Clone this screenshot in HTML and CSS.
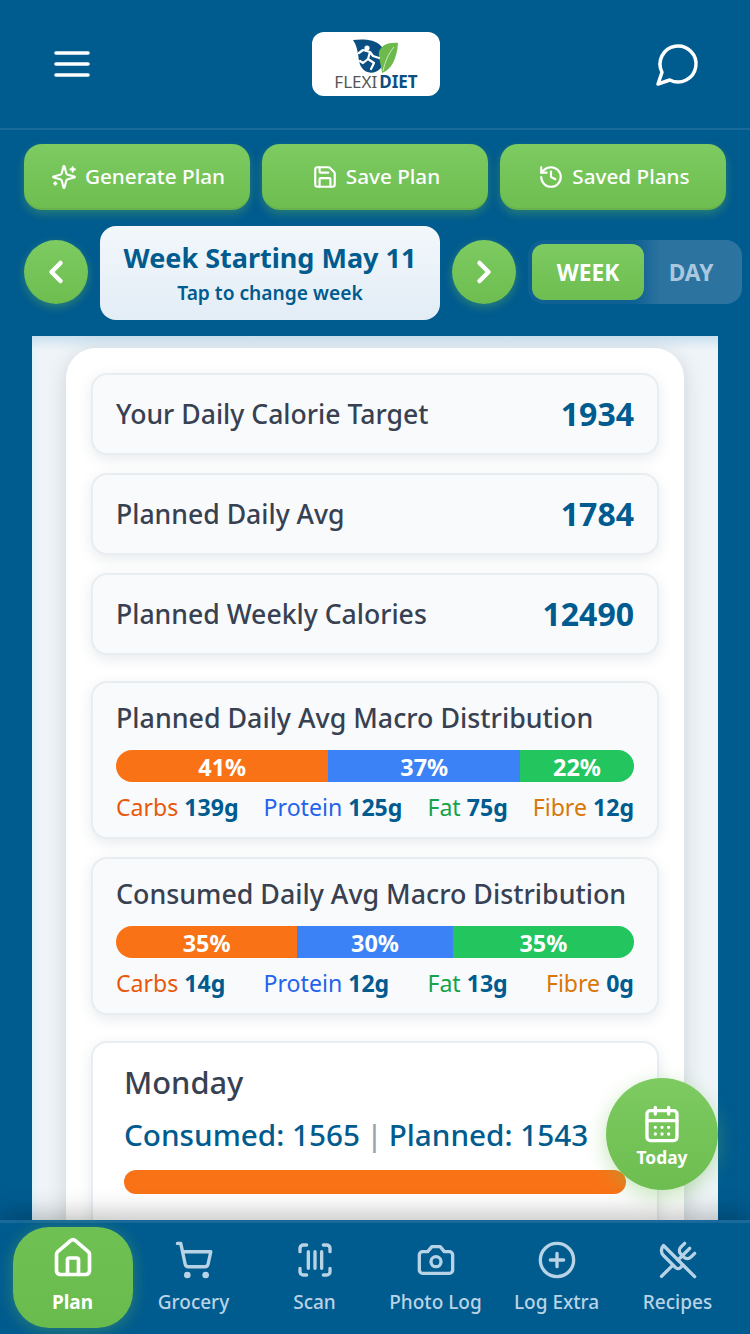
FILE: index.html
```html
<!DOCTYPE html>
<html lang="en">
<head>
<meta charset="utf-8">
<title>FlexiDiet</title>
<link rel="stylesheet" href="styles.css">
</head>
<body>
<div class="page">
  <header class="top">
    <svg class="ico menu" viewBox="0 0 36 28"><path d="M2 3h32M2 14h32M2 25h32"/></svg>
    <div class="logo">
      <svg class="logo-mark" viewBox="0 0 46 34">
        <path class="lm-blue" d="M0 1 C9 0 22 0 28 7 C33 13 33 24 27 30 C22 35 13 35 9 29 C4 23 7 11 0 1Z"/>
        <path class="lm-green" d="M45 4 C36 3 28 6 26 13 C25 18 28 24 29 34 C38 31 44 20 45 4Z"/>
        <path class="lm-vein" d="M30 32 C32 23 35 15 41 8"/>
        <circle class="lm-run" cx="14" cy="9" r="2.6"/>
        <path class="lm-runner" d="M6 14 L10 11 L17 13 L20 17 L26 19 M17 13 L15 20 L21 24 L18 30 M15 20 L10 24 L7 22"/>
      </svg>
      <div class="logo-text">FLEXI<b>DIET</b></div>
    </div>
    <svg class="ico chat" viewBox="0 0 24 24"><path d="M7.9 20A9 9 0 1 0 4 16.1L2 22Z"/></svg>
  </header>

  <div class="actions">
    <button class="act"><svg class="ico act-ico" viewBox="0 0 24 24"><path d="M9.937 15.5A2 2 0 0 0 8.5 14.063l-6.135-1.582a.5.5 0 0 1 0-.962L8.5 9.936A2 2 0 0 0 9.937 8.5l1.582-6.135a.5.5 0 0 1 .963 0L14.063 8.5A2 2 0 0 0 15.5 9.937l6.135 1.581a.5.5 0 0 1 0 .964L15.5 14.063a2 2 0 0 0-1.437 1.437l-1.582 6.135a.5.5 0 0 1-.963 0z"/><path d="M20 3v4M22 5h-4M4 17v2M5 18H3"/></svg>Generate Plan</button>
    <button class="act"><svg class="ico act-ico" viewBox="0 0 24 24"><path d="M15.2 3a2 2 0 0 1 1.4.6l3.8 3.8a2 2 0 0 1 .6 1.4V19a2 2 0 0 1-2 2H5a2 2 0 0 1-2-2V5a2 2 0 0 1 2-2z"/><path d="M17 21v-7a1 1 0 0 0-1-1H8a1 1 0 0 0-1 1v7"/><path d="M7 3v4a1 1 0 0 0 1 1h7"/></svg>Save Plan</button>
    <button class="act"><svg class="ico act-ico" viewBox="0 0 24 24"><path d="M3 12a9 9 0 1 0 9-9 9.75 9.75 0 0 0-6.74 2.74L3 8"/><path d="M3 3v5h5"/><path d="M12 7v5l4 2"/></svg>Saved Plans</button>
  </div>

  <div class="weekbar">
    <button class="circle"><svg class="ico chev" viewBox="0 0 24 24"><path d="m15 18-6-6 6-6"/></svg></button>
    <div class="weekcard">
      <div class="wk-title">Week Starting May 11</div>
      <div class="wk-sub">Tap to change week</div>
    </div>
    <button class="circle"><svg class="ico chev" viewBox="0 0 24 24"><path d="m9 18 6-6-6-6"/></svg></button>
    <div class="toggle">
      <div class="tg tg-on">WEEK</div>
      <div class="tg">DAY</div>
    </div>
  </div>

  <main class="main">
    <div class="panel">
      <div class="sheet">
        <div class="row"><span class="row-l">Your Daily Calorie Target</span><span class="row-v">1934</span></div>
        <div class="row"><span class="row-l">Planned Daily Avg</span><span class="row-v">1784</span></div>
        <div class="row"><span class="row-l">Planned Weekly Calories</span><span class="row-v">12490</span></div>

        <div class="macro macro-first">
          <div class="macro-title">Planned Daily Avg Macro Distribution</div>
          <div class="bar">
            <div class="seg s-c" style="width:41%">41%</div>
            <div class="seg s-p" style="width:37%">37%</div>
            <div class="seg s-f" style="width:22%">22%</div>
          </div>
          <div class="legend">
            <span class="lg c-c">Carbs <b>139g</b></span>
            <span class="lg c-p">Protein <b>125g</b></span>
            <span class="lg c-f">Fat <b>75g</b></span>
            <span class="lg c-b">Fibre <b>12g</b></span>
          </div>
        </div>

        <div class="macro">
          <div class="macro-title">Consumed Daily Avg Macro Distribution</div>
          <div class="bar">
            <div class="seg s-c" style="width:35%">35%</div>
            <div class="seg s-p" style="width:30%">30%</div>
            <div class="seg s-f" style="width:35%">35%</div>
          </div>
          <div class="legend">
            <span class="lg c-c">Carbs <b>14g</b></span>
            <span class="lg c-p">Protein <b>12g</b></span>
            <span class="lg c-f">Fat <b>13g</b></span>
            <span class="lg c-b">Fibre <b>0g</b></span>
          </div>
        </div>

        <div class="day">
          <div class="day-name">Monday</div>
          <div class="day-sum">Consumed: 1565 <i>|</i> Planned: 1543</div>
          <div class="day-bar"></div>
        </div>
      </div>
    </div>
  </main>

  <button class="fab">
    <svg class="ico fab-ico" viewBox="0 0 24 24"><path d="M8 2v4M16 2v4"/><rect x="3" y="4" width="18" height="18" rx="2"/><path d="M3 10h18M8 14h.01M12 14h.01M16 14h.01M8 18h.01M12 18h.01M16 18h.01"/></svg>
    <span>Today</span>
  </button>

  <nav class="nav">
    <div class="tab tab-on"><svg class="ico tab-ico" viewBox="0 0 24 24"><path d="M15 21v-8a1 1 0 0 0-1-1h-4a1 1 0 0 0-1 1v8"/><path d="M3 10a2 2 0 0 1 .709-1.528l7-5.999a2 2 0 0 1 2.582 0l7 5.999A2 2 0 0 1 21 10v9a2 2 0 0 1-2 2H5a2 2 0 0 1-2-2z"/></svg><span>Plan</span></div>
    <div class="tab"><svg class="ico tab-ico" viewBox="0 0 24 24"><circle cx="8" cy="21" r="1"/><circle cx="19" cy="21" r="1"/><path d="M2.05 2.05h2l2.66 12.42a2 2 0 0 0 2 1.58h9.78a2 2 0 0 0 1.95-1.57l1.65-7.43H5.12"/></svg><span>Grocery</span></div>
    <div class="tab"><svg class="ico tab-ico" viewBox="0 0 24 24"><path d="M3 7V5a2 2 0 0 1 2-2h2M17 3h2a2 2 0 0 1 2 2v2M21 17v2a2 2 0 0 1-2 2h-2M7 21H5a2 2 0 0 1-2-2v-2M8 7v10M12 7v10M16 7v10"/></svg><span>Scan</span></div>
    <div class="tab"><svg class="ico tab-ico" viewBox="0 0 24 24"><path d="M14.5 4h-5L7 7H4a2 2 0 0 0-2 2v9a2 2 0 0 0 2 2h16a2 2 0 0 0 2-2V9a2 2 0 0 0-2-2h-3l-2.5-3z"/><circle cx="12" cy="13" r="3"/></svg><span>Photo Log</span></div>
    <div class="tab"><svg class="ico tab-ico" viewBox="0 0 24 24"><circle cx="12" cy="12" r="10"/><path d="M8 12h8M12 8v8"/></svg><span>Log Extra</span></div>
    <div class="tab"><svg class="ico tab-ico" viewBox="0 0 24 24"><path d="m16 2-2.3 2.3a3 3 0 0 0 0 4.2l1.8 1.8a3 3 0 0 0 4.2 0L22 8"/><path d="M15 15 3.3 3.3a4.2 4.2 0 0 0 0 6l7.3 7.3c.7.7 2 .7 2.8 0L15 15Zm0 0 7 7"/><path d="m2.1 21.8 6.4-6.3"/><path d="m19 5-7 7"/></svg><span>Recipes</span></div>
  </nav>
</div>
</body>
</html>
```

FILE: styles.css
```css
* { box-sizing: border-box; }
html, body { margin: 0; padding: 0; }
body { font-family: "Noto Sans", "Open Sans", sans-serif; background: #005b8f; }
button { font-family: inherit; border: 0; padding: 0; }

.page {
  position: relative;
  width: 750px;
  height: 1334px;
  overflow: hidden;
  display: flex;
  flex-direction: column;
  background: #005b8f;
}

.ico { fill: none; stroke: currentColor; stroke-width: 2; stroke-linecap: round; stroke-linejoin: round; display: block; flex: none; }

/* header */
.top {
  height: 130px;
  flex: none;
  padding: 0 52px 0 54px;
  display: grid;
  grid-template-columns: 1fr auto 1fr;
  align-items: center;
  border-bottom: 2px solid #19699a;
  color: #fff;
}
.menu { width: 36px; height: 28px; stroke-width: 3.6; }
.chat { width: 48px; height: 48px; stroke-width: 1.75; margin: -1px -4px 0 0; justify-self: end; }
.logo {
  width: 128px;
  height: 64px;
  background: #fff;
  border-radius: 12px;
  display: flex;
  flex-direction: column;
  align-items: center;
  padding-top: 7px;
}
.logo-mark { width: 46px; height: 34px; display: block; }
.lm-blue { fill: #0b4f82; }
.lm-green { fill: #6db94c; }
.lm-vein { fill: none; stroke: #e6f3dd; stroke-width: .8; }
.lm-run { fill: #fff; }
.lm-runner { fill: none; stroke: #fff; stroke-width: 2.2; stroke-linecap: round; stroke-linejoin: round; }
.logo-text { font-size: 17px; line-height: 20px; color: #555; margin-top: -1px; }
.logo-text b { color: #0b4f82; font-weight: 700; margin-left: 2px; }

/* actions */
.actions { flex: none; display: flex; gap: 12px; padding: 14px 24px 0; }
.act {
  flex: 1;
  height: 66px;
  border-radius: 18px;
  background: linear-gradient(180deg, #7dcb61, #6dbd50);
  box-shadow: 0 4px 10px rgba(109, 189, 80, .35), inset 0 -2px 0 rgba(0, 0, 0, .06);
  color: #fff;
  font-size: 20.7px;
  font-weight: 500;
  line-height: 30px;
  padding-bottom: 2px;
  display: flex;
  align-items: center;
  justify-content: center;
  gap: 8px;
}
.act-ico { width: 26px; height: 26px; margin-left: 2px; margin-top: 2px; }

/* week bar */
.weekbar { flex: none; display: flex; align-items: center; gap: 12px; padding: 16px 8px 0 24px; }
.circle {
  width: 64px;
  height: 64px;
  flex: none;
  margin-bottom: 2px;
  border-radius: 50%;
  background: linear-gradient(180deg, #7dcb61, #6dbd50);
  box-shadow: 0 3px 10px rgba(109, 189, 80, .4);
  color: #fff;
  display: flex;
  align-items: center;
  justify-content: center;
}
.chev { width: 36px; height: 36px; stroke-width: 3; }
.weekcard {
  width: 340px;
  height: 94px;
  flex: none;
  border-radius: 16px;
  background: linear-gradient(180deg, #f2f7fb, #e3edf6);
  text-align: center;
  color: #005b8f;
  padding-top: 13px;
}
.wk-title { font-size: 27px; line-height: 38px; font-weight: 700; }
.wk-sub { font-size: 19.2px; line-height: 26px; font-weight: 600; margin-top: 3px; }
.toggle {
  flex: none;
  width: 214px;
  height: 64px;
  margin-bottom: 2px;
  padding: 4px;
  border-radius: 16px;
  background: linear-gradient(90deg, #0f6194 0, #0f6194 50%, #2c739f 62%, #2c739f 100%);
  display: flex;
}
.tg {
  flex: 1;
  display: flex;
  align-items: center;
  justify-content: center;
  font-size: 22.7px;
  font-weight: 700;
  color: #a9c8df;
}
.tg-on {
  flex: none;
  width: 112px;
  border-radius: 12px;
  background: linear-gradient(180deg, #7dcb61, #6dbd50);
  color: #fff;
}

/* content */
.main { flex: 1; min-height: 0; padding: 16px 32px 0; overflow: hidden; }
.panel {
  height: 100%;
  padding: 12px 34px 0;
  background:
    linear-gradient(180deg, #c9e0ee 0, rgba(201, 224, 238, 0) 14px),
    linear-gradient(90deg, #dff5fd 0, rgba(223, 245, 253, 0) 8px),
    #eff4f8;
  overflow: hidden;
}
.sheet {
  background: #fff;
  border-radius: 30px 30px 0 0;
  padding: 25px 25px 0;
  box-shadow: 0 4px 20px rgba(60, 80, 90, .2);
  height: 900px;
}
.row, .macro, .day {
  background: #f8fafc;
  border: 2px solid #e8edf2;
  border-radius: 16px;
  box-shadow: 0 4px 14px rgba(60, 80, 100, .12);
}
.row {
  height: 82px;
  margin-bottom: 18px;
  padding: 0 23px 2px;
  display: flex;
  align-items: center;
  justify-content: space-between;
}
.row-l { font-size: 26.6px; line-height: 34px; font-weight: 500; color: #374151; white-space: nowrap; margin-top: 2px; }
.row-v { font-size: 32px; font-weight: 700; color: #005b8f; }
.macro { height: 158px; padding: 18px 23px 0; margin-bottom: 18px; }
.macro-first { margin-top: 26px; }
.macro-title { font-size: 26.8px; line-height: 34px; font-weight: 500; color: #374151; white-space: nowrap; }
.bar { display: flex; height: 32px; margin-top: 15px; border-radius: 16px; overflow: hidden; }
.seg { display: flex; align-items: center; justify-content: center; padding-top: 2px; color: #fff; font-size: 23.4px; font-weight: 700; }
.s-c { background: #f97316; }
.s-p { background: #3b82f6; }
.s-f { background: #22c55e; }
.legend { display: flex; justify-content: space-between; margin-top: 9px; }
.lg { font-size: 23.1px; line-height: 32px; white-space: nowrap; }
.lg b { color: #005b8f; font-weight: 700; }
.c-c { color: #ea580c; }
.c-p { color: #2563eb; }
.c-f { color: #16a34a; }
.c-b { color: #d97706; }
.day {
  margin-top: 26px;
  background: #fff;
  height: 300px;
  padding: 18px 31px 0;
}
.day-name { font-size: 30.8px; line-height: 42px; font-weight: 500; color: #374151; }
.day-sum { font-size: 29.7px; line-height: 42px; font-weight: 500; color: #005b8f; margin-top: 11px; white-space: nowrap; }
.day-sum i { font-style: normal; color: #9ca3af; margin: 0 -1.5px; }
.day-bar { height: 24px; margin-top: 14px; border-radius: 12px; background: #f97316; }

/* fab */
.fab {
  position: absolute;
  z-index: 2;
  left: 606px;
  top: 1078px;
  width: 112px;
  height: 112px;
  padding-top: 26px;
  border-radius: 50%;
  background: linear-gradient(180deg, #7dcb61, #6dbd50);
  box-shadow: 0 6px 20px rgba(109, 189, 80, .4);
  color: #fff;
  display: flex;
  flex-direction: column;
  align-items: center;
  justify-content: flex-start;
  font-size: 17.4px;
  line-height: 26px;
  font-weight: 700;
}
.fab-ico { width: 40px; height: 40px; }

/* bottom nav */
.nav {
  flex: none;
  height: 114px;
  position: relative;
  background: #005b8f;
  border-top: 3px solid #19699a;
  box-shadow: 0 -8px 22px rgba(0, 0, 0, .22);
  display: flex;
  padding: 4px 12px 0;
}
.tab {
  width: 121px;
  height: 101px;
  display: flex;
  flex-direction: column;
  align-items: center;
  padding-top: 13px;
  color: #b9d3e6;
  font-size: 19px;
  font-weight: 500;
  gap: 9px;
}
.tab-on {
  width: 120px;
  margin: 0 .5px;
  padding-top: 9px;
  background: linear-gradient(180deg, #70c154, #6abb4e);
  border-radius: 36px;
  color: #fff;
  font-weight: 700;
  box-shadow: 0 2px 16px rgba(109, 189, 80, .4);
}
.tab-ico { width: 40px; height: 40px; }
.tab-on .tab-ico { width: 44px; height: 44px; }
.tab span { line-height: 26px; }
```
